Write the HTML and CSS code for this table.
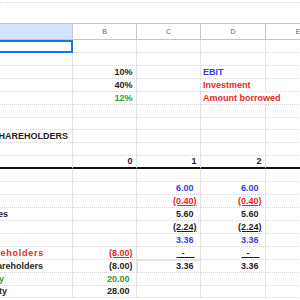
FILE: index.html
```html
<!DOCTYPE html>
<html>
<head>
<meta charset="utf-8">
<link rel="stylesheet" href="styles.css">
</head>
<body>
<div class="page">
  <div class="topline"></div>
  <div class="sheet">
    <div class="hd hd-a"></div><div class="hd">B</div><div class="hd">C</div><div class="hd">D</div><div class="hd">E</div>

    <div class="c sel"></div><div class="c"></div><div class="c"></div><div class="c"></div><div class="c"></div>
    <div class="c"></div><div class="c"></div><div class="c"></div><div class="c"></div><div class="c"></div>
    <div class="c"></div><div class="c">10%</div><div class="c"></div><div class="c l blue">EBIT</div><div class="c"></div>
    <div class="c"></div><div class="c">40%</div><div class="c"></div><div class="c l red">Investment</div><div class="c"></div>
    <div class="c"></div><div class="c green">12%</div><div class="c"></div><div class="c l red span2">Amount borrowed</div>
    <div class="c"></div><div class="c"></div><div class="c"></div><div class="c"></div><div class="c"></div>
    <div class="c"></div><div class="c"></div><div class="c"></div><div class="c"></div><div class="c"></div>
    <div class="c a8">HAREHOLDERS</div><div class="c"></div><div class="c"></div><div class="c"></div><div class="c"></div>
    <div class="c"></div><div class="c"></div><div class="c"></div><div class="c"></div><div class="c"></div>
    <div class="c thick"></div><div class="c thick">0</div><div class="c thick">1</div><div class="c thick">2</div><div class="c thick"></div>
    <div class="c"></div><div class="c"></div><div class="c"></div><div class="c"></div><div class="c"></div>
    <div class="c"></div><div class="c"></div><div class="c acc blue">6.00</div><div class="c acc blue">6.00</div><div class="c"></div>
    <div class="c"></div><div class="c"></div><div class="c red"><u>(0.40)</u></div><div class="c red"><u>(0.40)</u></div><div class="c"></div>
    <div class="c a14">es</div><div class="c"></div><div class="c acc">5.60</div><div class="c acc">5.60</div><div class="c"></div>
    <div class="c"></div><div class="c"></div><div class="c"><u>(2.24)</u></div><div class="c"><u>(2.24)</u></div><div class="c"></div>
    <div class="c"></div><div class="c"></div><div class="c acc blue">3.36</div><div class="c acc blue">3.36</div><div class="c"></div>
    <div class="c a17 red">eholders</div><div class="c red"><u>(8.00)</u></div><div class="c dash"><u>  -    </u></div><div class="c dash"><u>  -    </u></div><div class="c"></div>
    <div class="c a18">areholders</div><div class="c">(8.00)</div><div class="c acc boxed">3.36</div><div class="c acc">3.36</div><div class="c"></div>
    <div class="c a19 green">y</div><div class="c acc green">20.00</div><div class="c"></div><div class="c"></div><div class="c"></div>
    <div class="c a20">ty</div><div class="c acc">28.00</div><div class="c"></div><div class="c"></div><div class="c"></div>
  </div>
</div>
</body>
</html>
```

FILE: styles.css
```css
html, body {
  margin: 0;
  padding: 0;
  background: #ffffff;
}

.page {
  width: 300px;
  height: 300px;
  overflow: hidden;
  font-family: "Liberation Sans", Arial, sans-serif;
}

.topline {
  height: 2px;
  border-bottom: 1px dotted #d8d8d8;
  margin-bottom: 20px;
}

.sheet {
  display: grid;
  grid-template-columns: 73px 64px 64px 65px 65px;
  grid-template-rows: 17px repeat(20, 12.93px);
  width: 331px;
}

.hd {
  box-sizing: border-box;
  border-top: 1px solid #c4c7c5;
  border-bottom: 1px solid #c4c7c5;
  border-right: 1px solid #c4c7c5;
  font-size: 7px;
  color: #5f6368;
  display: flex;
  align-items: center;
  justify-content: center;
}

.hd-a {
  background: #d3e3fd;
}

.c {
  box-sizing: border-box;
  min-width: 0;
  border-right: 1px solid #e3e3e3;
  border-bottom: 1px dotted #d4d4d4;
  font-size: 9px;
  font-weight: bold;
  line-height: 11px;
  color: #1f1f1f;
  display: flex;
  align-items: flex-end;
  justify-content: flex-end;
  padding-right: 3.5px;
  white-space: pre;
}

.l {
  justify-content: flex-start;
  padding-left: 2px;
  padding-right: 0;
}

.span2 {
  grid-column: span 2;
}

.acc {
  padding-right: 6.5px;
}

.dash {
  padding-right: 5.5px;
}

.blue { color: #3b3be6; }
.red { color: #f01e1e; }
.green { color: #2e9a32; }

.sel {
  border: 2px solid #1a73e8;
  border-left: 0;
}

.thick {
  border-bottom: 2px solid #111111;
}

.boxed {
  border-top: 1px solid #e0e0e0;
  border-left: 1px solid #e0e0e0;
}

.a8 { padding-right: 4px; }
.a14 { padding-right: 64px; }
.a17 { padding-right: 28px; letter-spacing: 0.75px; }
.a18 { padding-right: 29px; }
.a19 { padding-right: 68px; }
.a20 { padding-right: 65px; }
```
